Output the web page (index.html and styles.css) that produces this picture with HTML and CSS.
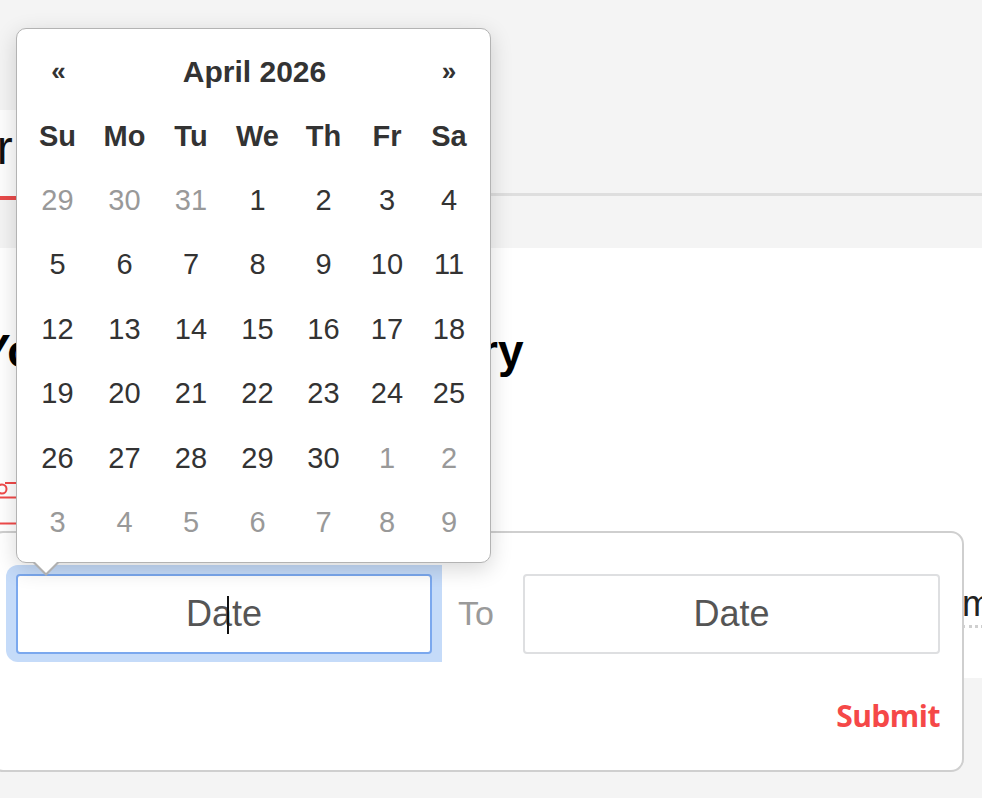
FILE: index.html
```html
<!DOCTYPE html>
<html lang="en">
<head>
<meta charset="utf-8">
<title>Transaction History</title>
<link rel="stylesheet" href="styles.css">
</head>
<body>
<div class="page">
  <div class="topbar"></div>
  <nav class="tabs">
    <a class="tab active">Order History</a>
  </nav>
  <main class="content">
    <h1 class="title">Your Transaction History</h1>
    <svg class="deco" width="60" height="50" viewBox="0 0 60 50" aria-hidden="true">
      <line x1="29" y1="5" x2="60" y2="5" />
      <circle cx="26" cy="11" r="4.5" />
      <line x1="0" y1="19.5" x2="60" y2="19.5" />
      <line x1="0" y1="45.5" x2="60" y2="45.5" />
    </svg>
    <div class="more"><span class="more-link">more</span></div>
  </main>

  <div class="range-card">
    <div class="range-row">
      <div class="ring">
        <div class="date-input focused">Da<span class="caret"></span>te</div>
      </div>
      <span class="to">To</span>
      <div class="date-input">Date</div>
    </div>
    <div class="actions">
      <span class="submit">Submit</span>
    </div>
  </div>

  <div class="datepicker">
    <div class="dp-grid">
      <div class="dp-nav">&laquo;</div>
      <div class="dp-title">April 2026</div>
      <div class="dp-nav">&raquo;</div>

      <div class="dp-dow">Su</div><div class="dp-dow">Mo</div><div class="dp-dow">Tu</div><div class="dp-dow">We</div><div class="dp-dow">Th</div><div class="dp-dow">Fr</div><div class="dp-dow">Sa</div>

      <div class="dp-day muted">29</div><div class="dp-day muted">30</div><div class="dp-day muted">31</div><div class="dp-day">1</div><div class="dp-day">2</div><div class="dp-day">3</div><div class="dp-day">4</div>
      <div class="dp-day">5</div><div class="dp-day">6</div><div class="dp-day">7</div><div class="dp-day">8</div><div class="dp-day">9</div><div class="dp-day">10</div><div class="dp-day">11</div>
      <div class="dp-day">12</div><div class="dp-day">13</div><div class="dp-day">14</div><div class="dp-day">15</div><div class="dp-day">16</div><div class="dp-day">17</div><div class="dp-day">18</div>
      <div class="dp-day">19</div><div class="dp-day">20</div><div class="dp-day">21</div><div class="dp-day">22</div><div class="dp-day">23</div><div class="dp-day">24</div><div class="dp-day">25</div>
      <div class="dp-day">26</div><div class="dp-day">27</div><div class="dp-day">28</div><div class="dp-day">29</div><div class="dp-day">30</div><div class="dp-day muted">1</div><div class="dp-day muted">2</div>
      <div class="dp-day muted">3</div><div class="dp-day muted">4</div><div class="dp-day muted">5</div><div class="dp-day muted">6</div><div class="dp-day muted">7</div><div class="dp-day muted">8</div><div class="dp-day muted">9</div>
    </div>
  </div>
</div>
</body>
</html>
```

FILE: styles.css
```css
html, body {
  margin: 0;
  padding: 0;
  background: #f4f4f4;
  overflow: hidden;
  font-family: "Liberation Sans", Arial, Helvetica, sans-serif;
}

.page {
  position: relative;
  margin-left: -130px;
  width: 1112px;
  height: 798px;
}

.topbar {
  height: 110px;
}

/* Tabs */
.tabs {
  display: flex;
  align-items: flex-start;
  height: 83px;
  border-bottom: 3px solid #dedede;
}

.tab {
  display: block;
  box-sizing: border-box;
  height: 90px;
  padding: 14px 20px 0 20px;
  font-size: 48px;
  line-height: 48px;
  color: #111;
  background: #fdfdfd;
}

.tab.active {
  border-bottom: 4px solid #e84a4a;
}

/* Content panel */
.content {
  margin-top: 52px;
  height: 430px;
  background: #fff;
  padding-left: 110px;
  box-sizing: border-box;
  padding-top: 80px;
}

.title {
  margin: 0;
  font-size: 46px;
  line-height: 46px;
  font-weight: 700;
  color: #000;
}

.deco {
  display: block;
  margin-top: 104px;
  margin-left: -4px;
}

.deco line,
.deco circle {
  stroke: #f04a4a;
  stroke-width: 2;
  fill: none;
}

.more {
  margin-top: 58px;
  padding-left: 982px;
}

.more-link {
  font-size: 36px;
  line-height: 36px;
  color: #222;
  padding-bottom: 1px;
  border-bottom: 3px dotted #cfcfcf;
}

/* Date range card (popover) */
.range-card {
  position: absolute;
  left: 120px;
  top: 531px;
  width: 974px;
  height: 241px;
  box-sizing: border-box;
  background: #fff;
  border: 2px solid #cfcfcf;
  border-radius: 13px;
  padding: 32px 21px 0 14px;
}

.range-row {
  display: flex;
  align-items: center;
}

.ring {
  padding: 9px 10px 8px 10px;
  background: #c5dbf9;
  border-radius: 12px 0 0 12px;
}

.date-input {
  box-sizing: border-box;
  width: 417px;
  height: 80px;
  border: 2px solid #dedfe1;
  border-radius: 4px;
  background: #fff;
  font-size: 36px;
  line-height: 76px;
  text-align: center;
  color: #555;
}

.date-input.focused {
  width: 416px;
  border-color: #7ba8ee;
}

.caret {
  display: inline-block;
  width: 2px;
  height: 38px;
  margin: 0 3px 0 -5px;
  background: #111;
  vertical-align: -8px;
}

.to {
  margin: 0 29px 0 16px;
  font-size: 34px;
  color: #9a9a9a;
}

.actions {
  display: flex;
  justify-content: flex-end;
  margin-top: 34px;
}

.submit {
  font-family: "Open Sans", "Liberation Sans", sans-serif;
  font-weight: 700;
  font-size: 30px;
  line-height: 40px;
  color: #f54848;
  letter-spacing: -0.5px;
  margin-right: 1px;
}

/* Datepicker */
.datepicker {
  position: absolute;
  left: 146px;
  top: 28px;
  width: 475px;
  height: 535px;
  box-sizing: border-box;
  background: #fff;
  border: 1.5px solid #b3b3b3;
  border-radius: 10px;
  box-shadow: 0 6px 22px rgba(0, 0, 0, 0.16);
  padding: 10.5px 0 0 7px;
}

.datepicker::before,
.datepicker::after {
  content: "";
  position: absolute;
  width: 0;
  height: 0;
  border-style: solid;
  border-color: transparent;
}

.datepicker::before {
  left: 15px;
  top: 100%;
  border-width: 14px 14px 0 14px;
  border-top-color: #b0b0b0;
}

.datepicker::after {
  left: 16.5px;
  top: 100%;
  margin-top: -1px;
  border-width: 12.5px 12.5px 0 12.5px;
  border-top-color: #fff;
}

.dp-grid {
  display: grid;
  grid-template-columns: 67px 67px 66px 67px 65px 62px 62px;
  grid-auto-rows: 64.4px;
  color: #333;
}

.dp-grid > div {
  display: flex;
  align-items: center;
  justify-content: center;
}

.dp-nav {
  font-size: 26px;
  font-weight: 700;
}

.dp-nav:first-child {
  padding-left: 2px;
}

.dp-nav:last-of-type {
  padding-right: 6px;
}

.dp-title {
  grid-column: span 5;
  font-size: 30px;
  font-weight: 700;
}

.dp-dow {
  font-size: 29px;
  font-weight: 700;
}

.dp-day {
  font-size: 29px;
}

.dp-day.muted {
  color: #999;
}
```
